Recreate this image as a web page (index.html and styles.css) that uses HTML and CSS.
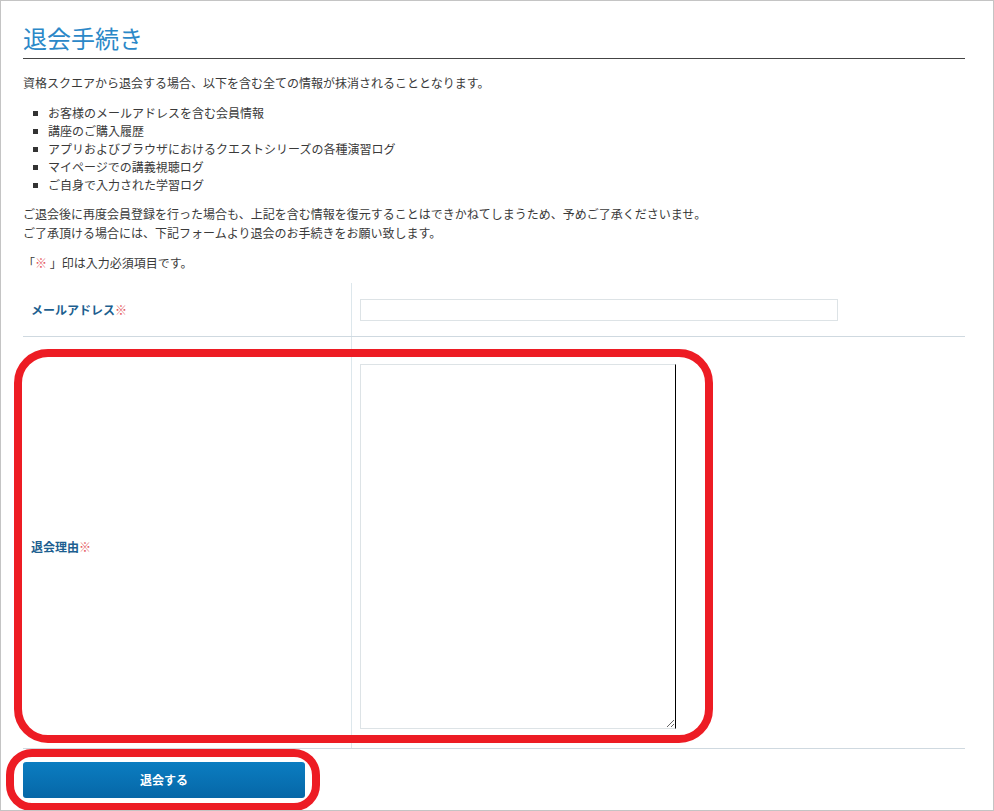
FILE: index.html
```html
<!DOCTYPE html>
<html lang="ja">
<head>
    <meta charset="utf-8">
    <title>退会手続き</title>
    <link rel="stylesheet" href="styles.css">
</head>
<body>
    <div id="container">
        <h1 class="ttl">退会手続き</h1>
        <p class="lead">資格スクエアから退会する場合、以下を含む全ての情報が抹消されることとなります。</p>
        <ul class="del_list">
            <li>お客様のメールアドレスを含む会員情報</li>
            <li>講座のご購入履歴</li>
            <li>アプリおよびブラウザにおけるクエストシリーズの各種演習ログ</li>
            <li>マイページでの講義視聴ログ</li>
            <li>ご自身で入力された学習ログ</li>
        </ul>
        <p class="note">ご退会後に再度会員登録を行った場合も、上記を含む情報を復元することはできかねてしまうため、予めご了承くださいませ。<br>ご了承頂ける場合には、下記フォームより退会のお手続きをお願い致します。</p>
        <p class="req">「<span class="must">※</span> 」印は入力必須項目です。</p>

        <form id="leaveform" action="#" method="post">
            <div class="frow">
                <div class="flabel">メールアドレス<span class="must">※</span></div>
                <div class="fval"><input type="text" class="fo_text"></div>
            </div>
            <div class="frow frow_big">
                <div class="flabel">退会理由<span class="must">※</span></div>
                <div class="fval"><textarea class="fo_area"></textarea></div>
            </div>
            <a href="#" role="button" class="leavebtn">退会する</a>
        </form>

        <!-- 注釈の赤枠 -->
        <div class="mark mark1"></div>
        <div class="mark mark2"></div>
    </div>
</body>
</html>
```

FILE: styles.css
```css
* {
    padding: 0px;
    margin: 0px;
    text-decoration: none;
    box-sizing: border-box;
}
body {
    font-family: "Noto Sans CJK JP", "Noto Sans", sans-serif;
    font-size: 12px;
    color: #3a3a3a;
    background-color: #fff;
}
#container {
    position: relative;
    width: 994px;
    height: 811px;
    border: 1px solid #c4c4c4;
    padding: 21px 28px 0px 22px;
    overflow: hidden;
}
.ttl {
    font-size: 24px;
    font-weight: normal;
    line-height: 32px;
    color: #2b88c8;
    padding-bottom: 4px;
    border-bottom: 1px solid #444;
}
.lead {
    margin-top: 15px;
    line-height: 18px;
}
.del_list {
    list-style: none;
    margin-top: 12px;
}
.del_list li {
    line-height: 18px;
    padding-left: 10px;
}
.del_list li::before {
    content: "";
    display: inline-block;
    width: 5px;
    height: 5px;
    background-color: #333;
    margin-right: 10px;
    vertical-align: middle;
    position: relative;
    top: -1px;
}
.note {
    margin-top: 10px;
    line-height: 19px;
}
.req {
    margin-top: 12px;
    line-height: 18px;
}
.must {
    color: #e4575d;
}
#leaveform {
    margin-top: 11px;
}
.frow {
    display: flex;
    border-bottom: 1px solid #cfd9e0;
}
.flabel {
    width: 329px;
    border-right: 1px solid #dde7ec;
    padding-left: 8px;
    display: flex;
    align-items: center;
    font-weight: bold;
    color: #1d5f90;
}
.frow_big .flabel {
    padding-top: 8px;
}
.fval {
    flex: 1;
    padding: 16px 0px 15px 8px;
}
.fo_text {
    display: block;
    width: 478px;
    height: 22px;
    border: 1px solid #dde3e6;
}
.frow_big .fval {
    padding: 27px 0px 19px 8px;
}
.fo_area {
    display: block;
    width: 316px;
    height: 365px;
    border: 1px solid #dde3e6;
    border-right-color: #000;
    resize: both;
}
.leavebtn {
    display: block;
    margin-top: 13px;
    width: 282px;
    height: 36px;
    line-height: 36px;
    text-align: center;
    font-weight: bold;
    color: #fff;
    border-radius: 3px;
    background: linear-gradient(#0b7dc1, #0667a7);
}
.mark {
    position: absolute;
    border: 8px solid #ed1c24;
}
.mark1 {
    left: 13px;
    top: 348px;
    width: 699px;
    height: 394px;
    border-radius: 34px;
}
.mark2 {
    left: 5px;
    top: 748px;
    width: 314px;
    height: 62px;
    border-radius: 26px;
}
```
